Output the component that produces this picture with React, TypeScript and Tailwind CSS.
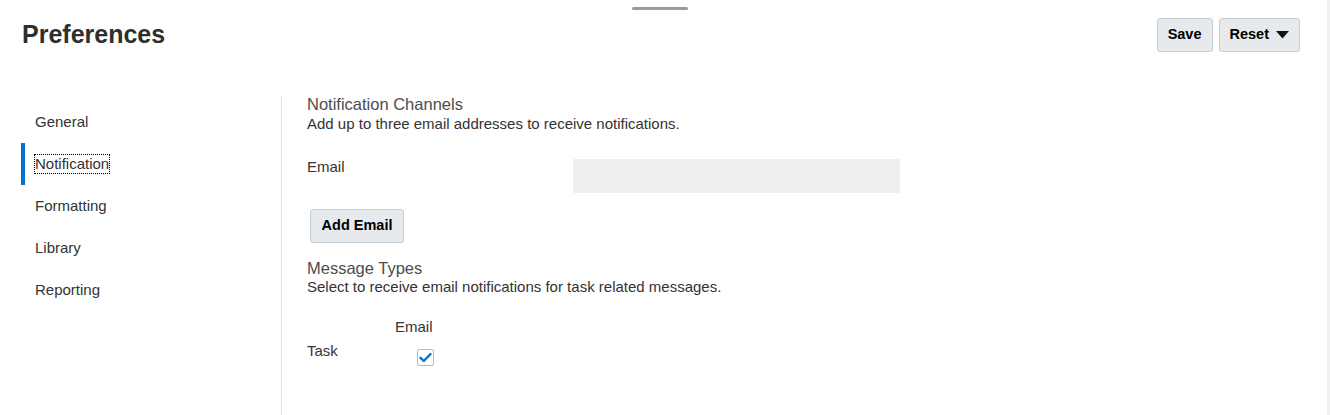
import React from "react";

const navItems = ["General", "Notification", "Formatting", "Library", "Reporting"];

export default function App() {
  return (
    <div
      className="relative w-[1330px] h-[415px] overflow-hidden bg-white border-r-[3px] border-[#f0f0f0] text-[#333333]"
      style={{ fontFamily: '"Liberation Sans", Arial, sans-serif' }}
    >
      <div className="absolute left-[632px] top-[7px] w-[56px] h-[3px] rounded-full bg-[#9b9b9b]" />

      {/* Header */}
      <div className="flex items-start justify-between pl-[22px] pr-[27px] pt-[18px]">
        <h1 className="mt-[1px] text-[25px] leading-[30px] font-bold text-[#2f2f2f]">Preferences</h1>
        <div className="flex gap-[6px]">
          <button className="h-[34px] px-[10px] rounded-[3px] border border-[#c4ced7] bg-[#e6eaed] text-[14.5px] font-bold text-black">
            Save
          </button>
          <button className="h-[34px] pl-[10px] pr-[10px] rounded-[3px] border border-[#c4ced7] bg-[#e6eaed] text-[14.5px] font-bold text-black flex items-center gap-[7px]">
            Reset
            <svg width="13" height="8" viewBox="0 0 13 8">
              <path d="M0 0 L13 0 L6.5 7.5 Z" fill="#111" />
            </svg>
          </button>
        </div>
      </div>

      {/* Body */}
      <div className="flex mt-[42px] pl-[21px]">
        <nav className="w-[261px] mt-[2px] h-[330px] border-r border-[#dde3e9] pt-[5px]">
          <ul>
            {navItems.map((item) => {
              const active = item === "Notification";
              return (
                <li
                  key={item}
                  className={
                    "h-[42px] flex items-center text-[15px] " +
                    (active ? "border-l-[4px] border-[#0572ce] pl-[10px]" : "pl-[14px]")
                  }
                >
                  <span
                    className={
                      active
                        ? "outline outline-1 outline-dotted outline-black leading-[18px]"
                        : "leading-[18px]"
                    }
                  >
                    {item}
                  </span>
                </li>
              );
            })}
          </ul>
        </nav>

        <div className="pl-[25px] flex flex-col">
          <h2 className="text-[16.5px] leading-[20px] text-[#4d4d4d]">Notification Channels</h2>
          <p className="text-[15px] leading-[20px] text-[#333333]">
            Add up to three email addresses to receive notifications.
          </p>

          <div className="flex items-start mt-[23px]">
            <label className="w-[266px] text-[15px] leading-[20px]">Email</label>
            <div className="mt-[2px] w-[327px] h-[34px] rounded-[2px] bg-[#eeeef0]" />
          </div>

          <div className="mt-[16px] ml-[3px]">
            <button className="h-[34px] w-[94px] rounded-[3px] border border-[#c4ced7] bg-[#e6eaed] text-[14.5px] font-bold text-black">
              Add Email
            </button>
          </div>

          <h2 className="mt-[15px] text-[16.5px] leading-[20px] text-[#4d4d4d]">Message Types</h2>
          <p className="text-[15px] leading-[18px] text-[#333333]">
            Select to receive email notifications for task related messages.
          </p>

          <div className="mt-[21px] ml-[88px] text-[15px] leading-[20px]">Email</div>
          <div className="flex items-start mt-[4px]">
            <span className="w-[110px] text-[15px] leading-[20px]">Task</span>
            <span className="mt-[8px] w-[17px] h-[17px] rounded-[2px] border border-[#b3bcc5] bg-white flex items-center justify-center">
              <svg width="13" height="11" viewBox="0 0 13 11">
                <path
                  d="M1.5 5.8 L4.8 9 L11.5 2"
                  fill="none"
                  stroke="#0572ce"
                  strokeWidth="2.4"
                  strokeLinecap="round"
                  strokeLinejoin="round"
                />
              </svg>
            </span>
          </div>
        </div>
      </div>
    </div>
  );
}
